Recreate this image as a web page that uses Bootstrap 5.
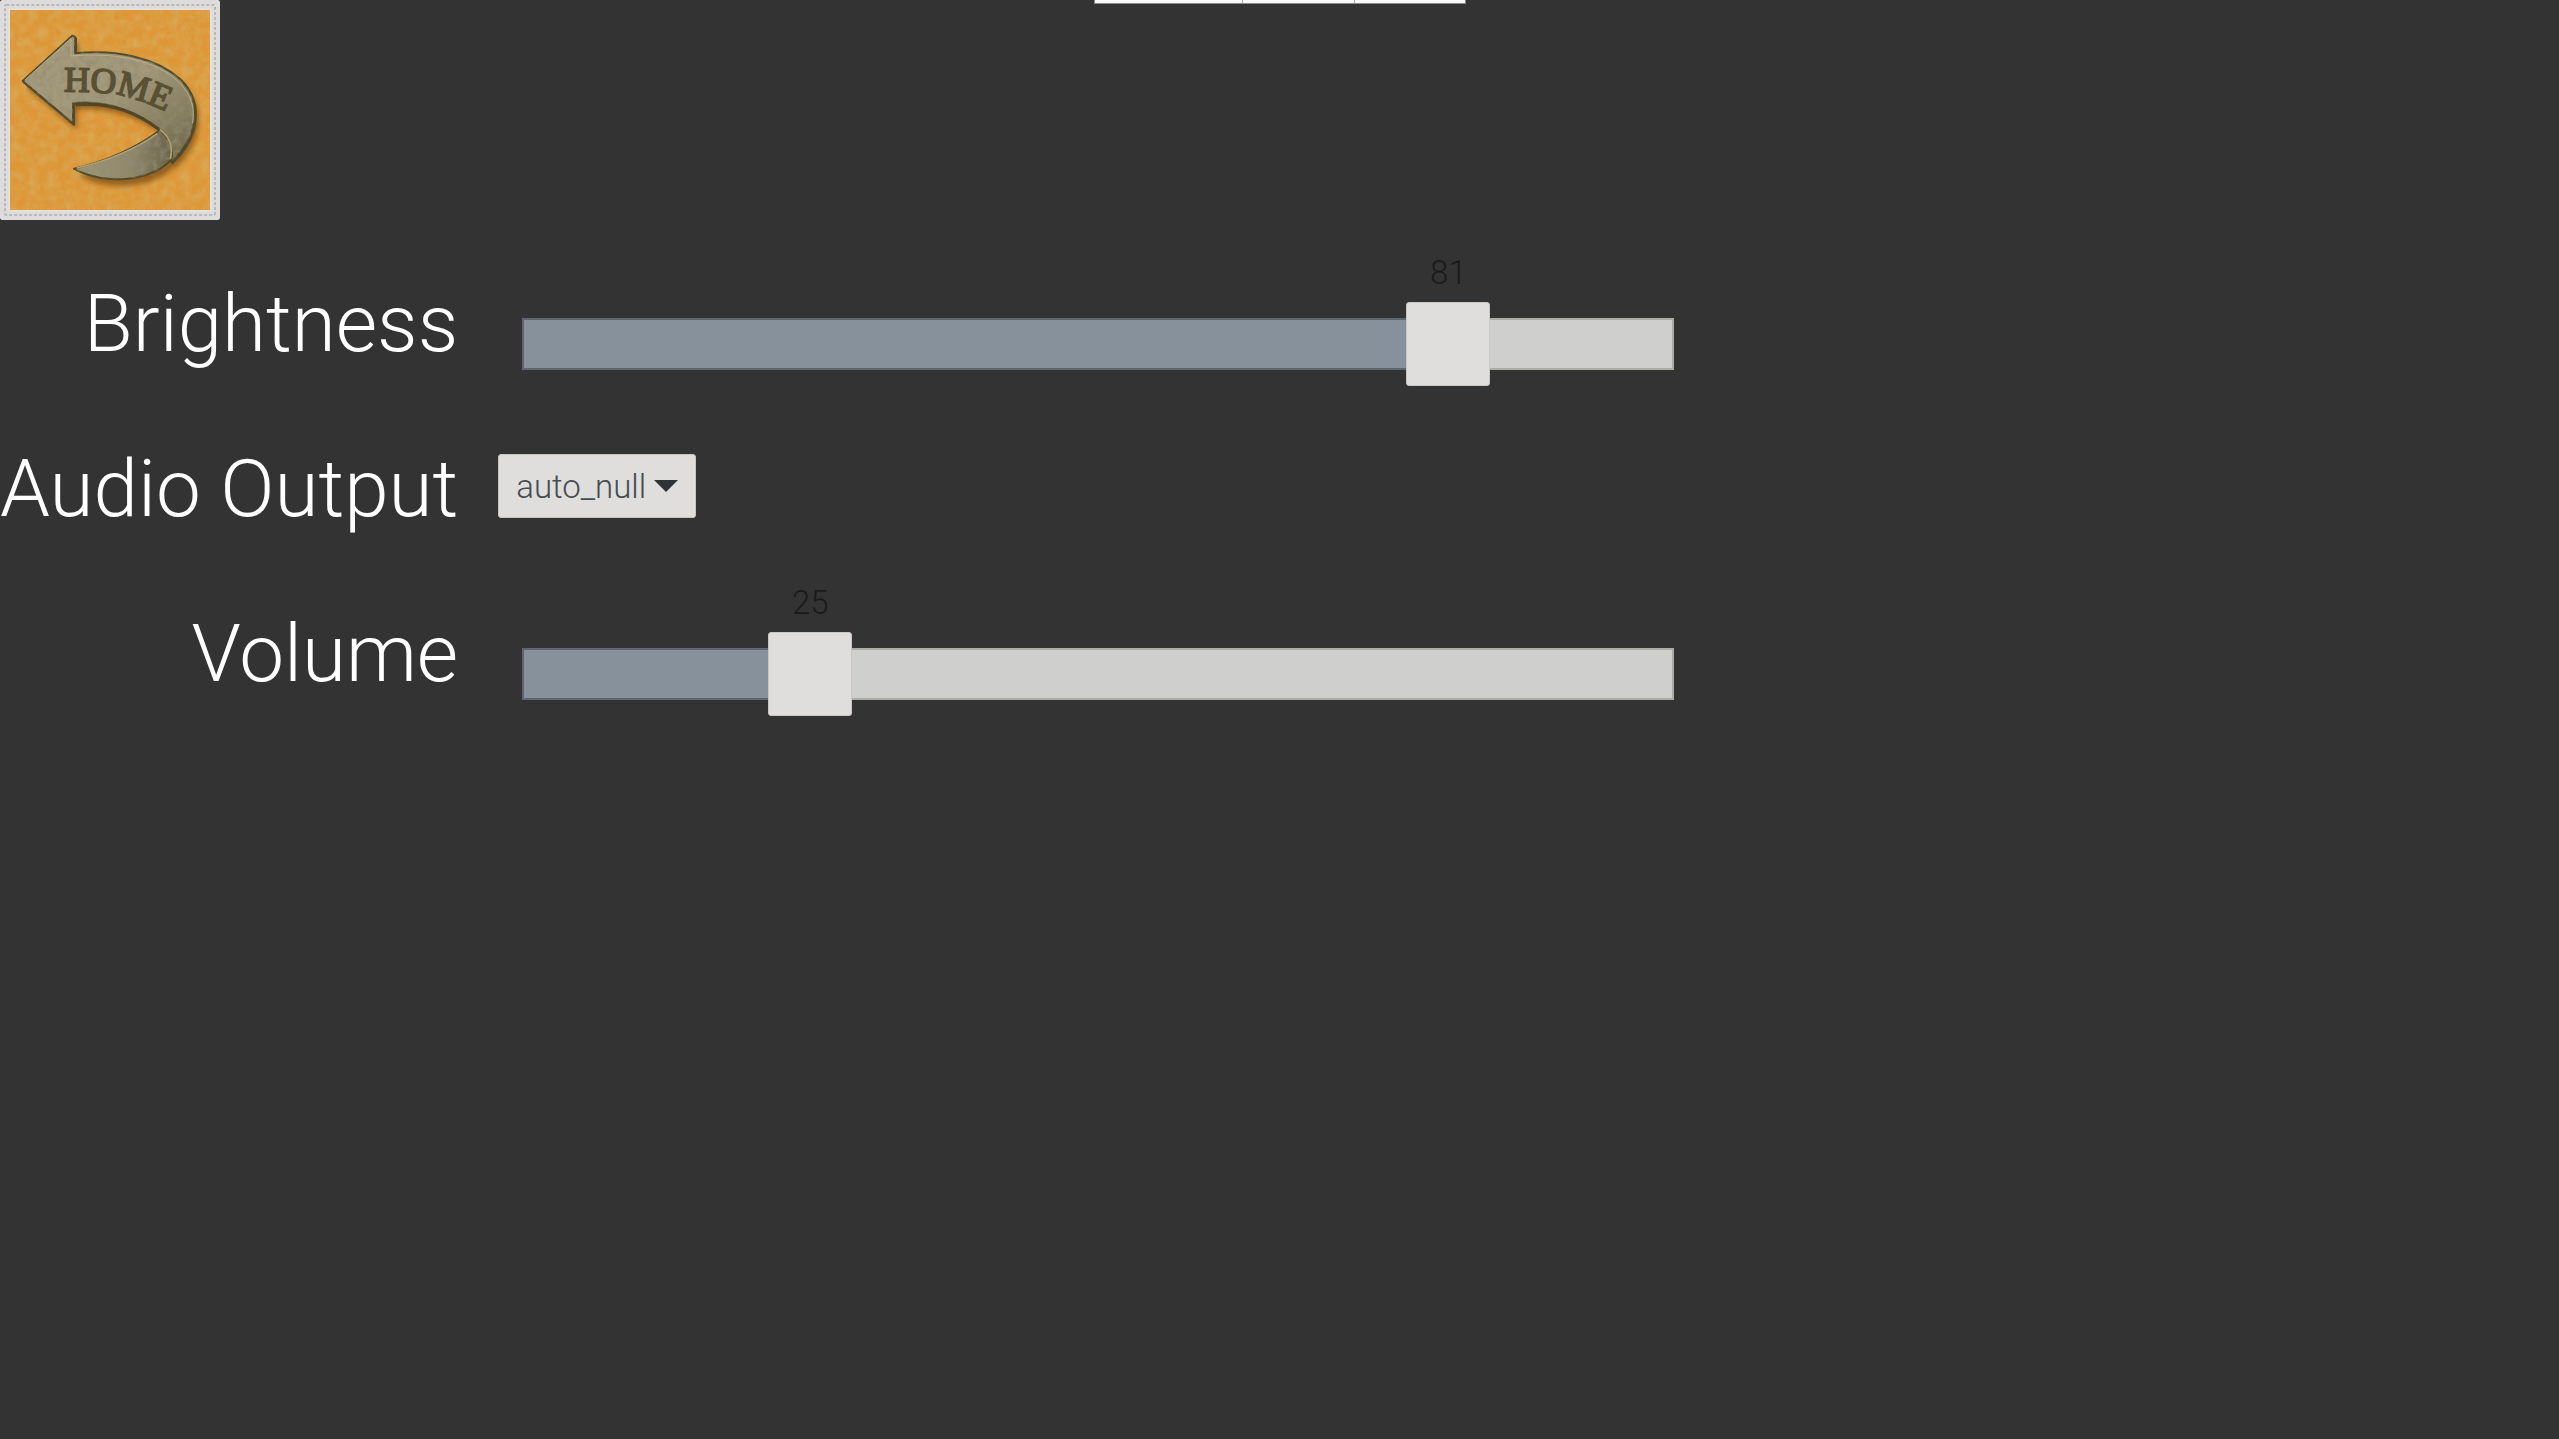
<!DOCTYPE html>
<html lang="en">
<head>
<meta charset="utf-8">
<meta name="viewport" content="width=device-width, initial-scale=1">
<title>Settings</title>
<link rel="stylesheet" href="https://cdn.jsdelivr.net/npm/bootstrap@5.3.0/dist/css/bootstrap.min.css">
<style>
  body { background: #333; color: #fff; font-family: Roboto, sans-serif; font-weight: 300; }
  .home-btn { width: 220px; height: 220px; border-radius: 4px; background: #dcdad9; line-height: 0; }
  .home-btn svg { width: 100%; height: 100%; }
  .top-strip { width: 372px; height: 4px; background: #fafafa; border: 1px solid #8b8b8b; border-top: 0; }
  .top-strip span { border-right: 1px solid #aaa; }
  .tab-one { width: 148px; }
  .tab-two { width: 112px; }
  .settings { display: grid; grid-template-columns: max-content minmax(0, 1236px); grid-auto-rows: 165px; column-gap: 22px; padding-top: 18px; }
  .setting-label { font-size: 80px; line-height: 96px; padding-top: 6px; white-space: nowrap; }
  .scale-box { --pos: 0; padding-top: 15px; }
  .scale-value { display: block; width: 84px; margin-left: calc((100% - 84px) * var(--pos)); font-size: 33px; line-height: 40px; color: #1a1a1a; text-align: center; }
  .scale-input {
    appearance: none; display: block; width: 100%; height: 84px; margin-top: 9px;
    background:
      linear-gradient(#87919b, #87919b) 44px 18px / calc((100% - 84px) * var(--pos)) 48px no-repeat,
      linear-gradient(#5e656e, #5e656e) 42px 16px / calc((100% - 84px) * var(--pos)) 52px no-repeat,
      linear-gradient(#cfcfcd, #cfcfcd) 44px 18px / calc(100% - 88px) 48px no-repeat,
      linear-gradient(#acaca6, #acaca6) 42px 16px / calc(100% - 84px) 52px no-repeat;
  }
  .scale-input::-webkit-slider-runnable-track { height: 84px; background: transparent; }
  .scale-input::-webkit-slider-thumb { appearance: none; width: 84px; height: 84px; border: 1px solid #cbc7c5; border-radius: 3px; background: #dfdedc; }
  .output-select {
    appearance: none; width: 198px; height: 64px; margin-left: 18px; padding: 2px 50px 0 17px;
    border: 1px solid #c8c4c0; border-radius: 3px; color: #454d50; font-size: 33px; font-weight: 300;
    background: #dfdedc url("data:image/svg+xml,%3Csvg xmlns='http://www.w3.org/2000/svg' viewBox='0 0 24 12'%3E%3Cpath d='M0 0h24L12 12z' fill='%232e3436'/%3E%3C/svg%3E") no-repeat right 17px center / 24px 12px;
  }
</style>
</head>
<body>
<div class="top-strip d-flex position-absolute top-0 start-50 translate-middle-x"><span class="tab-one"></span><span class="tab-two"></span></div>

<header class="d-flex">
  <button class="home-btn border-0 p-0" type="button" aria-label="Home">
    <svg viewBox="0 0 660 660" aria-hidden="true">
      <defs>
        <filter id="felt" x="0" y="0" width="100%" height="100%">
          <feTurbulence type="fractalNoise" baseFrequency=".035" numOctaves="3" seed="4"/>
          <feColorMatrix values="0 0 0 0 .7  0 0 0 0 .38  0 0 0 0 .08  2.4 0 0 0 -.85"/>
        </filter>
        <filter id="stone" x="0" y="0" width="100%" height="100%">
          <feTurbulence type="fractalNoise" baseFrequency=".05" numOctaves="3" seed="9" result="n"/>
          <feColorMatrix in="n" values="0 0 0 0 .28  0 0 0 0 .26  0 0 0 0 .18  1.8 0 0 0 -.75" result="c"/>
          <feComposite in="c" in2="SourceGraphic" operator="in"/>
        </filter>
        <filter id="soft"><feGaussianBlur stdDeviation="8"/></filter>
        <linearGradient id="band" x1="0" y1="0" x2="1" y2="1">
          <stop offset="0" stop-color="#a59a7c"/><stop offset=".5" stop-color="#a3987a"/><stop offset="1" stop-color="#6c6548"/>
        </linearGradient>
        <linearGradient id="tail" x1="0" y1="0" x2="1" y2="0">
          <stop offset="0" stop-color="#a29878"/><stop offset=".6" stop-color="#8f866a"/><stop offset="1" stop-color="#6b634a"/>
        </linearGradient>
        <path id="head" d="M68 243L217 107L225 111V160C350 147 470 174 540 237C608 303 598 406 514 486C522 440 507 410 479 388C405 331 318 300 219 309V370L68 243Z"/>
        <path id="curl" d="M479 391C412 443 316 485 222 506C280 540 370 547 437 525C473 513 500 497 515 476C519 439 507 409 479 391Z"/>
        <path id="arc" d="M192 275Q274 274 342 282Q425 297 520 345"/>
      </defs>
      <rect width="660" height="660" rx="8" fill="#dddbdb"/>
      <rect x="15" y="15" width="630" height="630" rx="4" fill="none" stroke="#b9b9ba" stroke-width="6" stroke-dasharray="9 6"/>
      <rect x="25" y="25" width="610" height="610" fill="#e4e1df"/>
      <rect x="30" y="30" width="600" height="600" fill="#dd9738"/>
      <rect x="30" y="30" width="600" height="600" filter="url(#felt)"/>
      <g fill="#70420b" opacity=".65" filter="url(#soft)" transform="translate(12 20)"><use href="#head"/><use href="#curl"/></g>
      <g stroke="#514a2c" stroke-width="6" stroke-linejoin="round">
        <use href="#head" fill="#5b5233" transform="translate(3 4)"/>
        <use href="#curl" fill="url(#tail)"/>
        <use href="#head" fill="url(#band)"/>
      </g>
      <use href="#curl" filter="url(#stone)"/><use href="#head" filter="url(#stone)"/>
      <path d="M75 240L213 115V168C350 155 468 184 532 242C574 283 586 325 577 370" fill="none" stroke="#bcae82" stroke-width="3"/>
      <path d="M230 504C320 484 410 446 472 401M480 389Q524 422 511 477" fill="none" stroke="#b1a075" stroke-width="5"/>
      <path d="M228 314C325 305 407 335 475 387" fill="none" stroke="#514728" stroke-width="9"/>
      <text font-family="Liberation Serif, serif" font-size="107" font-weight="400" fill="#5a5034" stroke="#5a5034" stroke-width="5"><textPath href="#arc">HOME</textPath></text>
    </svg>
  </button>
</header>

<main class="settings">
  <label class="setting-label align-self-center text-end" for="brightness">Brightness</label>
  <div class="scale-box" style="--pos: .804">
    <output class="scale-value" for="brightness">81</output>
    <input class="scale-input" id="brightness" type="range" min="0" max="100" step="0.1" value="80.4">
  </div>

  <label class="setting-label align-self-center text-end" for="output">Audio Output</label>
  <div class="d-flex align-items-center">
    <select class="output-select" id="output"><option>auto_null</option></select>
  </div>

  <label class="setting-label align-self-center text-end" for="volume">Volume</label>
  <div class="scale-box" style="--pos: .25">
    <output class="scale-value" for="volume">25</output>
    <input class="scale-input" id="volume" type="range" min="0" max="100" value="25">
  </div>
</main>
<script src="https://cdn.jsdelivr.net/npm/bootstrap@5.3.0/dist/js/bootstrap.bundle.min.js"></script>
</body>
</html>
